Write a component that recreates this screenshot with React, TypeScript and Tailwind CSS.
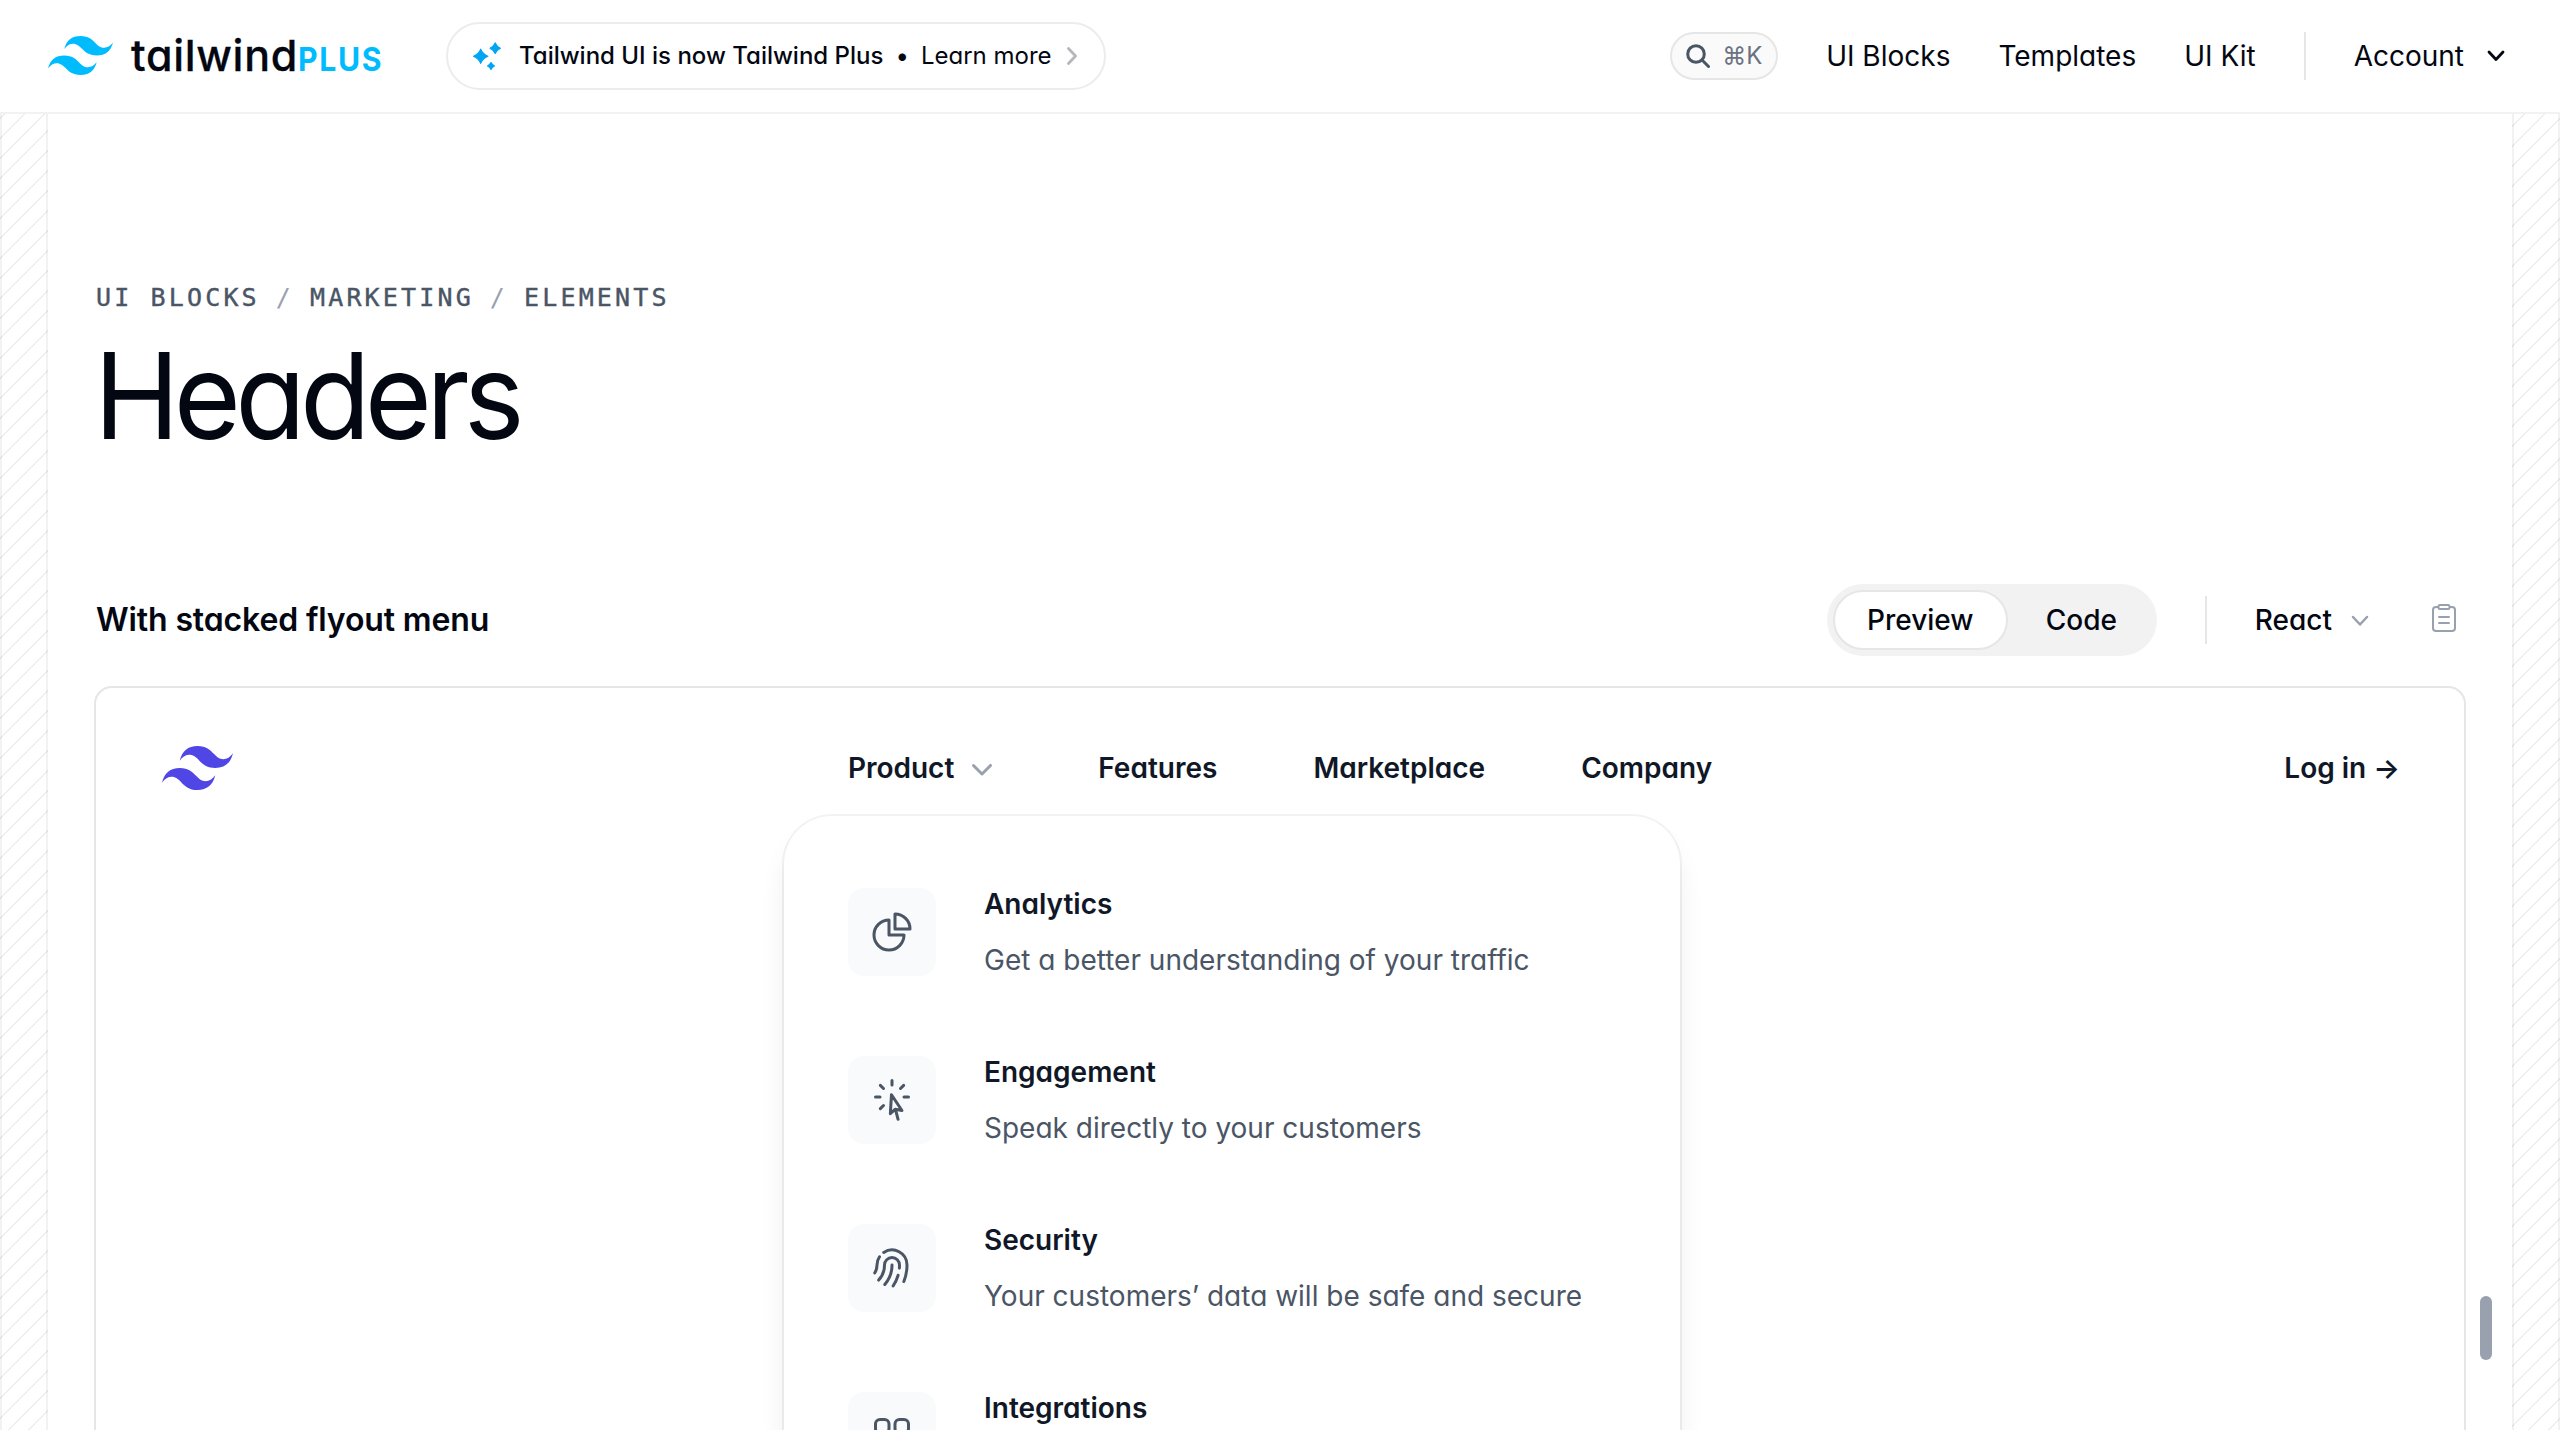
import React from "react";
import {
  HiOutlineChartPie,
  HiOutlineCursorArrowRays,
  HiOutlineFingerPrint,
  HiOutlineSquaresPlus,
} from "react-icons/hi2";

const stripes =
  "bg-fixed bg-[size:20px_20px] bg-[repeating-linear-gradient(315deg,rgba(3,7,18,0.065)_0,rgba(3,7,18,0.065)_2px,transparent_0,transparent_50%)] border-x-2 border-[#030712]/5";

function Mark({ className }: { className: string }) {
  return (
    <svg viewBox="0 0 54 32.4" className={className} fill="currentColor" preserveAspectRatio="none">
      <path
        fillRule="evenodd"
        clipRule="evenodd"
        d="M27 0c-7.2 0-11.7 3.6-13.5 10.8 2.7-3.6 5.85-4.95 9.45-4.05 2.054.513 3.522 2.004 5.147 3.653C30.744 13.09 33.808 16.2 40.5 16.2c7.2 0 11.7-3.6 13.5-10.8-2.7 3.6-5.85 4.95-9.45 4.05-2.054-.513-3.522-2.004-5.147-3.653C36.756 3.11 33.692 0 27 0zM13.5 16.2C6.3 16.2 1.8 19.8 0 27c2.7-3.6 5.85-4.95 9.45-4.05 2.054.514 3.522 2.004 5.147 3.653C17.244 29.29 20.308 32.4 27 32.4c7.2 0 11.7-3.6 13.5-10.8-2.7 3.6-5.85 4.95-9.45 4.05-2.054-.513-3.522-2.004-5.147-3.653C23.256 19.31 20.192 16.2 13.5 16.2z"
      />
    </svg>
  );
}

function TopBar() {
  return (
    <header className="flex h-[114px] items-center border-b-2 border-[#f2f2f3] px-12">
      <div className="flex items-center pb-px">
        <Mark className="h-[39px] w-[65px] text-[#00bcff]" />
        <div className="ml-[18px] flex w-[253px] items-baseline pb-[2px] whitespace-nowrap">
          <span className="text-[43px] leading-[60px] font-medium tracking-[0.7px] [-webkit-text-stroke:0.3px]">tailwind</span>
          <span className="origin-left scale-x-[0.93] text-[32.500px] font-bold tracking-[1.800px] text-[#00bcff]">PLUS</span>
        </div>
      </div>
      <a className="ml-[62px] flex h-[68px] w-[660px] items-center rounded-full border-2 border-[#ececed] pl-[23px] text-[24px] whitespace-nowrap">
        <svg viewBox="0 0 30 32" className="h-8 w-[30px] shrink-0" fill="#00a6f4" stroke="#00a6f4" strokeWidth="1.200" strokeLinejoin="round">
          <path d="M9.700 9.200Q11.700 14.300 16.900 16.300 11.700 18.300 9.700 23.400 7.700 18.300 2.500 16.300 7.700 14.300 9.700 9.200ZM24.200 2.900Q25.800 6.600 29.400 8.200 25.800 9.800 24.200 13.500 22.600 9.800 19 8.200 22.600 6.600 24.200 2.900ZM20 22.600Q21.200 24.800 23.400 26 21.200 27.200 20 29.400 18.800 27.200 16.600 26 18.800 24.800 20 22.600Z" />
        </svg>
        <span className="ml-[18px] font-medium">Tailwind UI is now Tailwind Plus</span>
        <span className="mr-[12px] ml-[12px]">•</span>
        <span>Learn more</span>
        <svg viewBox="0 0 10 18" className="ml-[15px] h-[18px] w-[10px]" fill="none" stroke="#b5b7bd" strokeWidth="2.800" strokeLinecap="round" strokeLinejoin="round">
          <path d="M1.500 1.500 8.500 9l-7 7.500" />
        </svg>
      </a>
      <nav className="ml-auto flex items-center text-[28px] whitespace-nowrap">
        <button className="flex h-12 w-[108px] items-center rounded-full border-2 border-[#e6e6e7] bg-[#fafafa] pl-[14px]">
          <svg viewBox="0 0 24 24" className="size-6" fill="none" stroke="#4a5565" strokeWidth="3" strokeLinecap="round">
            <circle cx="10" cy="10" r="8.300" />
            <path d="m16.300 16.300 6.200 6.200" />
          </svg>
          <span className="ml-[12px] text-[24px] text-[#6a7282]">⌘K</span>
        </button>
        <a className="ml-12">UI Blocks</a>
        <a className="ml-12">Templates</a>
        <a className="ml-12">UI Kit</a>
        <span className="ml-12 h-12 w-[2px] bg-[#e6e6e7]" />
        <a className="ml-12">Account</a>
        <svg viewBox="0 0 18 12" className="mr-[7px] ml-[23px] h-3 w-[18px]" fill="none" stroke="#030712" strokeWidth="2.800" strokeLinecap="round" strokeLinejoin="round">
          <path d="m2 2 7 7.500L16 2" />
        </svg>
      </nav>
    </header>
  );
}

const features = [
  { name: "Analytics", text: "Get a better understanding of your traffic", Icon: HiOutlineChartPie },
  { name: "Engagement", text: "Speak directly to your customers", Icon: HiOutlineCursorArrowRays },
  { name: "Security", text: "Your customers’ data will be safe and secure", Icon: HiOutlineFingerPrint },
  { name: "Integrations", text: "", Icon: HiOutlineSquaresPlus },
];

function Flyout() {
  return (
    <div className="absolute top-[128px] left-[688px] w-[896px] rounded-[48px] bg-white p-8 text-[28px] leading-[48px] shadow-[0_0_0_2px_rgba(16,24,40,0.05),0_20px_30px_-6px_rgba(0,0,0,0.1),0_8px_12px_-8px_rgba(0,0,0,0.1)]">
      {features.map(({ name, text, Icon }) => (
        <div key={name} className="flex gap-12 p-8">
          <div className="mt-2 flex size-[88px] shrink-0 items-center justify-center rounded-2xl bg-gray-50">
            <Icon className="size-12 text-gray-600" />
          </div>
          <div className="whitespace-nowrap">
            <p className="font-semibold text-gray-900">{name}</p>
            <p className="mt-2 text-gray-600">{text}</p>
          </div>
        </div>
      ))}
    </div>
  );
}

function Preview() {
  return (
    <section className="relative mx-[46px] mt-[30px] h-[900px] rounded-[18px] border-2 border-[#e6e6e7]">
      <div className="flex h-40 items-center px-16 text-[28px] font-semibold whitespace-nowrap text-gray-900">
        <div className="flex-1">
          <Mark className="ml-[2px] h-[44px] w-[71px] text-[#4f46e5]" />
        </div>
        <div className="flex gap-24">
          <span className="flex items-center gap-2">
            Product
            <svg viewBox="0 0 20 20" className="size-10 text-gray-400" fill="currentColor">
              <path
                fillRule="evenodd"
                clipRule="evenodd"
                d="M5.220 8.220a.75.75 0 0 1 1.060 0L10 11.940l3.720-3.720a.75.75 0 1 1 1.060 1.060l-4.250 4.250a.75.75 0 0 1-1.060 0L5.220 9.280a.75.75 0 0 1 0-1.060Z"
              />
            </svg>
          </span>
          <span>Features</span>
          <span>Marketplace</span>
          <span>Company</span>
        </div>
        <div className="flex-1 text-right">Log in →</div>
      </div>
      <Flyout />
    </section>
  );
}

export default function App() {
  return (
    <div className="flex h-[1430px] flex-col overflow-hidden bg-white font-[Inter,sans-serif] text-[#030712] [font-feature-settings:'cv11']">
      <TopBar />
      <div className="flex min-h-0 flex-1">
        <div className={"w-12 shrink-0 " + stripes} />
        <main className="relative min-w-0 flex-1">
          <div className="flex gap-4 px-12 pt-[166px] font-['DejaVu_Sans_Mono',monospace] text-[25px] leading-[36px] tracking-[3.150px] whitespace-nowrap text-gray-600">
            <span className="[-webkit-text-stroke:0.4px]">UI BLOCKS</span>
            <span className="text-gray-400">/</span>
            <span className="[-webkit-text-stroke:0.4px]">MARKETING</span>
            <span className="text-gray-400">/</span>
            <span className="[-webkit-text-stroke:0.4px]">ELEMENTS</span>
          </div>
          <h1 className="mt-5 ml-[46px] origin-left scale-x-[0.96] text-[120px] leading-[120px] tracking-[-6px]">Headers</h1>
          <div className="mt-[128px] flex h-[72px] items-center px-12 text-[28px] font-medium whitespace-nowrap">
            <h2 className="text-[32px] font-semibold tracking-[-0.130px]">With stacked flyout menu</h2>
            <div className="ml-auto flex h-[72px] w-[330px] items-center rounded-full bg-[#f2f2f2] pl-[6px]">
              <span className="flex h-[60px] w-[175px] items-center justify-center rounded-full border-2 border-[#e6e6e7] bg-white">Preview</span>
              <span className="ml-[38px]">Code</span>
            </div>
            <span className="ml-12 h-12 w-[2px] bg-[#e6e6e7]" />
            <span className="ml-12">React</span>
            <svg viewBox="0 0 18 12" className="mt-[2px] ml-[19px] h-3 w-[18px]" fill="none" stroke="#99a1af" strokeWidth="2.500" strokeLinecap="round" strokeLinejoin="round">
              <path d="m2 2 7 7.500L16 2" />
            </svg>
            <svg viewBox="0 0 24 28" className="mr-[8px] mb-1 ml-[63px] h-7 w-6" fill="none" stroke="#99a1af" strokeWidth="2" strokeLinecap="round" strokeLinejoin="round">
              <path d="M6 3H4a3 3 0 0 0-3 3v18a3 3 0 0 0 3 3h16a3 3 0 0 0 3-3V6a3 3 0 0 0-3-3h-2M7 13h10M7 19h10" />
              <rect x="6.500" y="1" width="11" height="4" rx="1.500" />
            </svg>
          </div>
          <Preview />
          <div className="absolute top-[1182px] right-[20px] h-16 w-3 rounded-full bg-[#99a1af]" />
        </main>
        <div className={"w-12 shrink-0 " + stripes} />
      </div>
    </div>
  );
}
